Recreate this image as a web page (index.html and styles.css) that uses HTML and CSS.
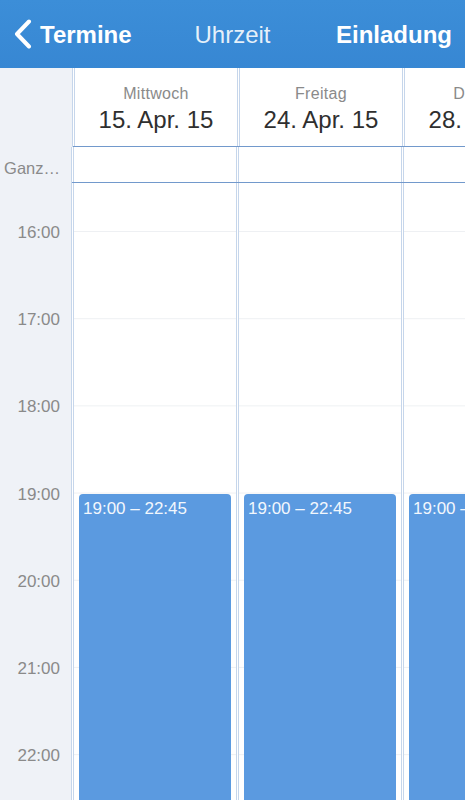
FILE: index.html
```html
<!DOCTYPE html>
<html lang="de">
<head>
<meta charset="utf-8">
<title>Uhrzeit</title>
<link rel="stylesheet" href="styles.css">
</head>
<body>
<div class="screen">
  <header class="navbar">
    <div class="nav-left">
      <svg class="chev" width="20" height="30" viewBox="0 0 20 30"><polyline points="16,2.5 4,15 16,27.5" fill="none" stroke="#fff" stroke-width="4" stroke-linecap="round" stroke-linejoin="round"/></svg>
      <span class="nav-back">Termine</span>
    </div>
    <div class="nav-title">Uhrzeit</div>
    <div class="nav-right">Einladung</div>
  </header>

  <div class="row row-head">
    <div class="tcol"></div>
    <div class="days">
      <div class="day head"><div class="dname">Mittwoch</div><div class="ddate">15. Apr. 15</div></div>
      <div class="day head"><div class="dname">Freitag</div><div class="ddate">24. Apr. 15</div></div>
      <div class="day head"><div class="dname">Dienstag</div><div class="ddate">28. Apr. 15</div></div>
    </div>
  </div>

  <div class="row row-allday">
    <div class="tcol allday-label">Ganz…</div>
    <div class="days">
      <div class="day"></div>
      <div class="day"></div>
      <div class="day"></div>
    </div>
  </div>

  <div class="row row-body">
    <div class="tcol times">
      <div class="tlabel">16:00</div>
      <div class="tlabel">17:00</div>
      <div class="tlabel">18:00</div>
      <div class="tlabel">19:00</div>
      <div class="tlabel">20:00</div>
      <div class="tlabel">21:00</div>
      <div class="tlabel">22:00</div>
    </div>
    <div class="days">
      <div class="day grid"><div class="event" style="top:311px;height:327px">19:00 – 22:45</div></div>
      <div class="day grid"><div class="event" style="top:311px;height:327px">19:00 – 22:45</div></div>
      <div class="day grid"><div class="event" style="top:311px;height:327px">19:00 – 22:45</div></div>
    </div>
  </div>
</div>
</body>
</html>
```
FILE: styles.css
```css
html, body {
  margin: 0;
  padding: 0;
  background: #ffffff;
}
body {
  font-family: "Liberation Sans", Arial, sans-serif;
  width: 465px;
  height: 800px;
  overflow: hidden;
}
.screen {
  width: 465px;
  height: 800px;
  display: flex;
  flex-direction: column;
  overflow: hidden;
}
.navbar {
  height: 68px;
  flex-shrink: 0;
  background: linear-gradient(180deg, #3c8ed8 0%, #3787d3 100%);
  display: grid;
  grid-template-columns: 1fr auto 1fr;
  align-items: center;
  padding: 2px 13px 0 13px;
  box-sizing: border-box;
  color: #ffffff;
  font-size: 24px;
}
.nav-left {
  display: flex;
  align-items: center;
  justify-self: start;
}
.chev {
  display: block;
  margin-right: 7px;
  margin-top: -2px;
}
.nav-back {
  font-weight: bold;
}
.nav-title {
  color: rgba(255, 255, 255, 0.88);
}
.nav-right {
  justify-self: end;
  font-weight: bold;
}
.row {
  display: flex;
  flex-shrink: 0;
}
.tcol {
  width: 72px;
  flex-shrink: 0;
  background: #eff2f7;
  border-right: 1px solid #c6d6eb;
}
.days {
  display: flex;
  gap: 1px;
  padding-left: 1px;
  flex: 1;
  overflow: hidden;
}
.day {
  width: 162px;
  flex-shrink: 0;
  border-left: 1px solid #c6d6eb;
  border-right: 1px solid #c6d6eb;
  position: relative;
}
.row-head {
  height: 79px;
}
.row-head .days,
.row-allday .days {
  border-bottom: 1px solid #7299cc;
}
.head {
  text-align: center;
  padding-top: 16px;
  white-space: nowrap;
}
.dname {
  font-size: 16px;
  line-height: 19px;
  color: #8a8a8a;
  letter-spacing: 0.3px;
}
.ddate {
  margin-top: 3px;
  font-size: 24px;
  line-height: 28px;
  color: #2f2f2f;
}
.row-allday {
  height: 36px;
}
.allday-label {
  display: flex;
  align-items: center;
  justify-content: flex-end;
  padding: 6px 11px 0 0;
  box-sizing: border-box;
  font-size: 16.5px;
  color: #8a8a8a;
}
.row-body {
  flex: 1;
  overflow: hidden;
}
.times {
  padding-top: 6px;
  box-sizing: border-box;
}
.tlabel {
  height: 87.2px;
  line-height: 87.2px;
  text-align: right;
  padding-right: 11px;
  font-size: 17px;
  color: #8a8a8a;
}
.grid {
  background-color: #ffffff;
  background-image: linear-gradient(180deg, #eef0f3 0px, #eef0f3 1px, transparent 1px);
  background-size: 100% 87.2px;
  background-repeat: repeat-y;
  background-position: 0 48px;
}
.event {
  position: absolute;
  left: 5px;
  right: 5px;
  background: #5b9ae0;
  border-radius: 4px;
  color: #f2f7fd;
  font-size: 17px;
  line-height: 20px;
  padding: 5px 0 0 4px;
  box-sizing: border-box;
  white-space: nowrap;
  overflow: hidden;
}
```
